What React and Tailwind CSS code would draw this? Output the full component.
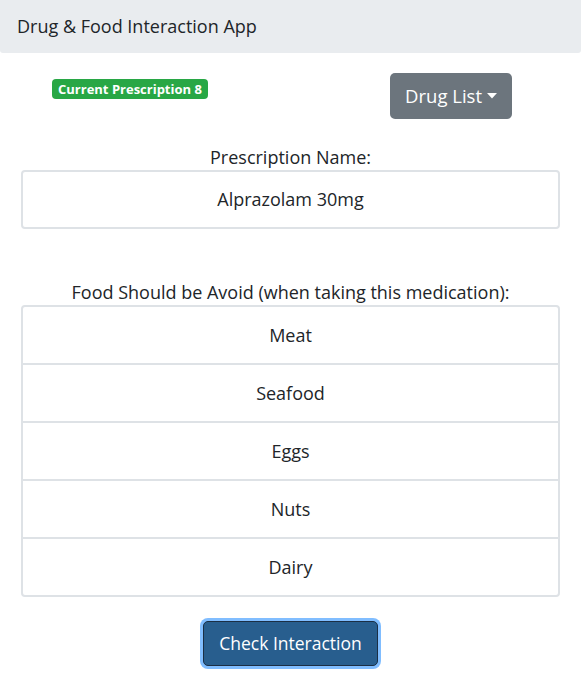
import React from 'react';

const foods = ['Meat', 'Seafood', 'Eggs', 'Nuts', 'Dairy'];

export default function App() {
  return (
    <div className="min-h-screen bg-white text-[#212529] text-[18px]" style={{ fontFamily: '"Open Sans", "Noto Sans", sans-serif' }}>
      {/* Header */}
      <div className="h-[53px] bg-[#e9ecef] flex items-center px-[17px] rounded-b-[3px]">
        <span className="text-[#212529]">Drug & Food Interaction App</span>
      </div>

      <div className="px-[21px]">
        {/* Badge + dropdown row */}
        <div className="flex items-start justify-between h-[66px] pt-[20px]">
          <div className="pl-[31px] pt-[6px]">
            <span className="h-[20px] flex items-center bg-[#28a745] text-white text-[13px] font-bold leading-none px-[6px] rounded-[4px]">
              Current Prescription 8
            </span>
          </div>
          <div className="pr-[48px]">
            <button className="bg-[#6c757d] text-white text-[18.5px] h-[46px] px-[15px] rounded-[5px] flex items-center gap-[5px]">
              Drug List
              <svg width="10" height="6" viewBox="0 0 10 6"><path d="M0 0h10L5 5.5z" fill="white" /></svg>
            </button>
          </div>
        </div>

        {/* Prescription name */}
        <div className="text-center mt-[25px] leading-[26px]">Prescription Name:</div>
        <div className="h-[59px] border-2 border-[#dee2e6] rounded-[4px] flex items-center justify-center">
          Alprazolam 30mg
        </div>

        {/* Food list */}
        <div className="text-center mt-[50px] leading-[26px]">Food Should be Avoid (when taking this medication):</div>
        <div className="border-2 border-[#dee2e6] rounded-[4px] flex flex-col">
          {foods.map((f, i) => (
            <div
              key={f}
              className={`flex items-center justify-center ${i < foods.length - 1 ? 'h-[58px] border-b-2 border-[#dee2e6]' : 'h-[56px]'}`}
            >
              {f}
            </div>
          ))}
        </div>

        {/* Check button */}
        <div className="flex justify-center mt-[24px]">
          <button className="bg-[#285e8e] text-white text-[17.5px] h-[45px] px-[15px] rounded-[5px] border border-[#1b2f45] ring-[3px] ring-[#80bdff]">
            Check Interaction
          </button>
        </div>
      </div>
    </div>
  );
}
